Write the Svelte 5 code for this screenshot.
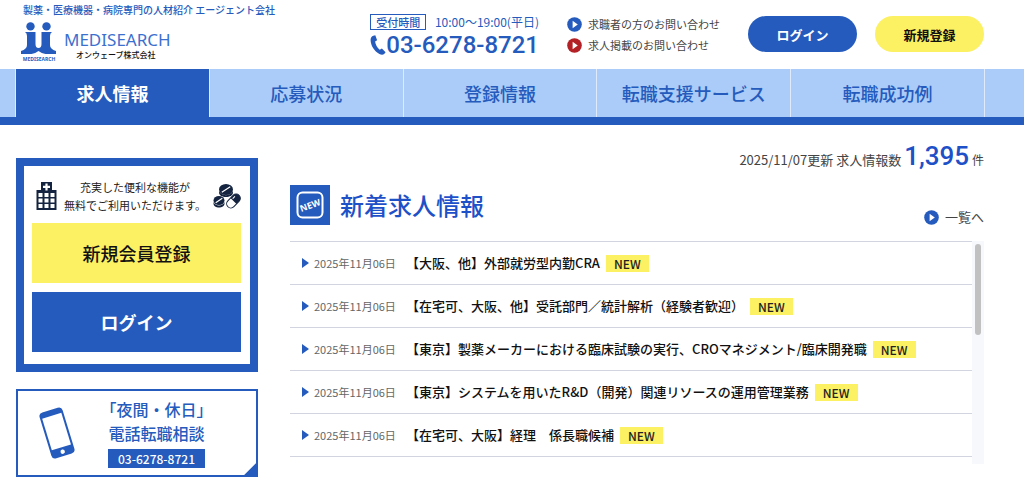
<script lang="ts">
	type Job = {
		date: string;
		title: string;
	};

	const menu = ['求人情報', '応募状況', '登録情報', '転職支援サービス', '転職成功例'];

	let current = $state<number>(0);

	const jobs: Job[] = [
		{ date: '2025年11月06日', title: '【大阪、他】外部就労型内勤CRA' },
		{ date: '2025年11月06日', title: '【在宅可、大阪、他】受託部門／統計解析（経験者歓迎）' },
		{
			date: '2025年11月06日',
			title: '【東京】製薬メーカーにおける臨床試験の実行、CROマネジメント/臨床開発職'
		},
		{ date: '2025年11月06日', title: '【東京】システムを用いたR&D（開発）関連リソースの運用管理業務' },
		{ date: '2025年11月06日', title: '【在宅可、大阪】経理　係長職候補' }
	];
</script>

{#snippet arrow()}
	<svg class="arrow" viewBox="0 0 15 15" aria-hidden="true">
		<circle cx="7.5" cy="7.5" r="7.3" fill="currentColor" />
		<path d="M5.600 3.800v7.400l5.200-3.700z" fill="#fff" />
	</svg>
{/snippet}

<header class="header">
	<div class="brand">
		<p class="tagline">製薬・医療機器・病院専門の人材紹介 エージェント会社</p>
		<a class="logo" href="#top">
			<span class="logo-mark">
				<svg viewBox="0 0 38 33" aria-hidden="true">
					<g fill="#255bbc">
						<circle cx="10.5" cy="4.4" r="4.2" />
						<circle cx="26.5" cy="4.4" r="4.2" />
						<path
							d="M5 10h10.500v12q0 4 3 4t3-4V10H32q-2 1-2 4v9q0 4 6 6v3H25.500q-3 0-7-3-4 3-7 3H1v-3q6-2 6-6v-9q0-3-2-4z"
						/>
					</g>
				</svg>
				<span class="logo-small">MEDISEARCH</span>
			</span>
			<span class="logo-text">
				<span class="logo-name">MEDISEARCH</span>
				<span class="logo-company">オンウェーブ株式会社</span>
			</span>
		</a>
	</div>

	<div class="contact">
		<div class="hours">
			<span class="hours-label">受付時間</span>
			<span>10:00～19:00(平日)</span>
		</div>
		<a class="tel" href="tel:0362788721">
			<svg viewBox="0 0 16 20" aria-hidden="true">
				<path
					d="M3.400.8 5.300.3l1.800 4.900-2 1.300c.4 3 2 6 4.600 8.200l2.200-1.100 3.700 3.600-1.400 1.700c-1.200 1.100-3 1-4.800.1C4.400 16.600.6 10.500.6 5.100.6 3 1.600 1.300 3.400.8z"
					fill="currentColor"
				/>
			</svg>03-6278-8721
		</a>
	</div>

	<div class="inquiry">
		<a href="#seeker">{@render arrow()}求職者の方のお問い合わせ</a>
		<a class="red" href="#company">{@render arrow()}求人掲載のお問い合わせ</a>
	</div>

	<div class="account">
		<button type="button" class="pill">ログイン</button>
		<button type="button" class="pill yellow">新規登録</button>
	</div>
</header>

<nav class="nav">
	<ul>
		{#each menu as item, i}
			<li>
				<a href="#menu" class:active={i === current} onclick={() => (current = i)}>{item}</a>
			</li>
		{/each}
	</ul>
</nav>

<main class="main">
	<aside class="side">
		<section class="member">
			<div class="member-lead">
				<svg class="hospital" viewBox="0 0 21 28" aria-hidden="true">
					<path d="M5 0h11v8h4.500v20H.5V8H5z" fill="#14233f" />
					<path d="M10.500 1.400v7M7 4.900h7" stroke="#fff" stroke-width="2.200" />
					<path
						d="M2.500 11h4v4h-4zM8.500 11h4v4h-4zM14.500 11h4v4h-4zM2.500 16.500h4v4h-4zM8.500 16.500h4v4h-4zM14.500 16.500h4v4h-4zM2.500 22h4v4h-4zM8.500 22h4v4h-4zM14.500 22h4v4h-4z"
						fill="#fff"
					/>
				</svg>
				<p>充実した便利な機能が<br />無料でご利用いただけます。</p>
				<svg class="pills" viewBox="0 0 28 28" aria-hidden="true">
					<g fill="#14233f">
						<ellipse cx="13" cy="7.500" rx="7" ry="5.500" />
						<path d="M6 9v1.500c0 6 14 6 14 0V9c-2 5.500-12 5.500-14 0z" />
						<ellipse cx="6" cy="18.500" rx="5.500" ry="4.500" />
						<path d="M.5 20v1.500c0 5.300 11 5.300 11 0V20c-1.500 4.500-9.500 4.500-11 0z" />
					</g>
					<path d="m8.800 10.300 8.400-5.600M2.700 20.700l6.600-4.400" stroke="#fff" stroke-width="1.200" />
					<g transform="rotate(-46 20.500 19)">
						<rect x="12.500" y="14.800" width="16" height="8.400" rx="4.200" fill="#fff" stroke="#14233f" />
						<path d="M20.500 14.800h3.800a4.200 4.200 0 0 1 0 8.400h-3.800z" fill="#14233f" />
						<path d="M22 16.800h2.500" stroke="#fff" stroke-linecap="round" />
					</g>
				</svg>
			</div>
			<button type="button" class="block yellow">新規会員登録</button>
			<button type="button" class="block">ログイン</button>
		</section>

		<a class="night" href="tel:0362788721">
			<svg viewBox="0 0 38 52" aria-hidden="true">
				<g transform="rotate(-17 19 26)">
					<rect x="7" y="2" width="24" height="48" rx="4" fill="#255bbc" />
					<rect x="9" y="8" width="20" height="33" fill="#fff" />
					<circle cx="19" cy="45.500" r="2.200" fill="#fff" />
				</g>
			</svg>
			<span class="night-text">
				<span>「夜間・休日」</span>
				<span>電話転職相談</span>
				<span class="night-tel">03-6278-8721</span>
			</span>
		</a>
	</aside>

	<section class="content">
		<p class="update">2025/11/07更新 求人情報数 <strong>1,395</strong> <small>件</small></p>

		<div class="heading">
			<svg viewBox="0 0 40 40" aria-hidden="true">
				<path d="M0 0h40v40H0z" fill="#255bbc" />
				<rect x="7.500" y="7.500" width="25" height="25" rx="5" fill="none" stroke="#fff" stroke-width="2" />
				<text x="20" y="23.500" transform="rotate(-20 20 20)">NEW</text>
			</svg>
			<h2>新着求人情報</h2>
			<a href="#list">{@render arrow()}一覧へ</a>
		</div>

		<div class="list">
			<ul>
				{#each jobs as job}
					<li>
						<span class="date">{job.date}</span>
						<a href="#job">{job.title}</a>
						<span class="new">NEW</span>
					</li>
				{/each}
			</ul>
			<div class="scrollbar"><div class="thumb"></div></div>
		</div>
	</section>
</main>

<style>
	:global(body) {
		background: #fff;
		color: #444;
		font-family: 'Noto Sans CJK JP', sans-serif;
		font-size: 13px;
	}

	p,
	h2,
	ul {
		margin: 0;
		padding: 0;
		list-style: none;
	}

	a {
		color: inherit;
		text-decoration: none;
	}

	button {
		border: 0;
		background: #255bbc;
		color: #fff;
		font-family: inherit;
		font-weight: 700;
		cursor: pointer;
	}

	button.yellow {
		background: #fcf063;
		color: #111;
		font-weight: 500;
	}

	svg {
		flex: none;
		display: block;
	}

	.arrow {
		width: 15px;
		height: 15px;
		color: #255bbc;
	}

	/* header */
	.header {
		display: grid;
		grid-template-columns: 1fr auto auto auto;
		column-gap: 28px;
		padding: 2px 40px 5px 16px;
	}

	.tagline {
		padding-left: 7px;
		color: #255bbc;
		font-size: 10px;
		font-weight: 500;
		line-height: 16px;
	}

	.logo {
		display: flex;
		gap: 6px;
		padding: 4px 0 0 4px;
	}

	.logo-mark {
		width: 38px;
	}

	.logo-mark svg {
		width: 38px;
		height: 33px;
	}

	.logo-small {
		display: flex;
		justify-content: center;
		color: #255bbc;
		font: 700 5px/9px 'Noto Sans', sans-serif;
	}

	.logo-text {
		display: flex;
		flex-direction: column;
		padding-top: 9px;
	}

	.logo-name {
		color: #3c70cf;
		font: 17px/18px 'Noto Sans', sans-serif;
	}

	.logo-company {
		padding-left: 12px;
		color: #111;
		font-size: 8px;
		font-weight: 500;
		line-height: 12px;
	}

	.contact {
		padding-top: 12px;
		color: #255bbc;
	}

	.hours {
		display: flex;
		justify-content: space-between;
		gap: 5px;
		font-size: 12px;
		line-height: 16px;
	}

	.hours-label {
		padding: 0 5px;
		border: 1px solid #255bbc;
		font-size: 11px;
		font-weight: 500;
		line-height: 14px;
	}

	.tel {
		display: flex;
		align-items: center;
		font-family: Roboto, sans-serif;
		font-size: 24px;
		font-weight: 500;
		line-height: 30px;
	}

	.tel svg {
		width: 16px;
		height: 20px;
	}

	.inquiry {
		padding-top: 12px;
		font-size: 11px;
		line-height: 21px;
	}

	.inquiry a {
		display: flex;
		align-items: center;
		gap: 6px;
	}

	.red .arrow {
		color: #b32025;
	}

	.account {
		display: flex;
		gap: 18px;
		padding-top: 14px;
	}

	.pill {
		width: 109px;
		height: 36px;
		border-radius: 18px;
		font-size: 13px;
	}

	button.pill {
		font-weight: 700;
	}

	/* global menu */
	.nav {
		padding: 0 39px 0 15px;
		border-bottom: 8px solid #255bbc;
		background: #abccf9;
	}

	.nav ul {
		display: grid;
		grid-template-columns: repeat(5, 1fr);
		border-left: 1px solid #dfebfc;
	}

	.nav a {
		display: block;
		border-right: 1px solid #dfebfc;
		color: #255bbc;
		font-size: 18px;
		font-weight: 500;
		line-height: 48px;
		text-align: center;
	}

	.nav a.active {
		background: #255bbc;
		color: #fff;
		font-weight: 700;
	}

	/* body */
	.main {
		display: grid;
		grid-template-columns: 242px 1fr;
		column-gap: 32px;
		padding: 0 40px 10px 16px;
	}

	.side {
		padding-top: 33px;
	}

	.member {
		display: flex;
		flex-direction: column;
		gap: 9px;
		padding: 12px 9px 12px 8px;
		border: 8px solid #255bbc;
	}

	.member-lead {
		display: flex;
		align-items: center;
		justify-content: space-between;
		padding-left: 4px;
		color: #222;
		font-size: 11px;
		line-height: 18px;
		text-align: center;
		white-space: nowrap;
	}

	.hospital {
		width: 21px;
		height: 28px;
	}

	.pills {
		width: 28px;
		height: 28px;
	}

	.block {
		height: 60px;
		font-size: 18px;
	}

	.night {
		display: flex;
		gap: 32px;
		margin-top: 17px;
		padding: 6px 20px 7px;
		border: 2px solid #255bbc;
		background: linear-gradient(135deg, transparent 48%, #255bbc 54%) right bottom / 12px 12px no-repeat;
		color: #255bbc;
	}

	.night svg {
		width: 38px;
		height: 52px;
		margin-top: 10px;
	}

	.night-text {
		display: flex;
		flex-direction: column;
		align-items: center;
		width: 97px;
		font-size: 16px;
		font-weight: 500;
		line-height: 24px;
		white-space: nowrap;
	}

	.night-tel {
		align-self: stretch;
		margin-top: 4px;
		background: #255bbc;
		color: #fff;
		font-size: 12px;
		line-height: 19px;
		text-align: center;
	}

	.content {
		min-width: 0;
	}

	.update {
		padding-top: 13px;
		font-size: 13px;
		line-height: 36px;
		text-align: right;
	}

	.update strong {
		color: #1e50c8;
		font-family: Roboto, sans-serif;
		font-size: 26px;
		font-weight: 500;
	}

	.update small {
		font-size: 12px;
	}

	.heading {
		display: flex;
		align-items: center;
		gap: 10px;
		padding: 7px 0 16px;
	}

	.heading > svg {
		width: 40px;
		height: 40px;
	}

	.heading text {
		fill: #fff;
		font: 700 9px 'Open Sans', sans-serif;
		text-anchor: middle;
	}

	.heading h2 {
		flex: 1;
		color: #1e50c8;
		font-size: 24px;
		font-weight: 500;
		line-height: 40px;
	}

	.heading a {
		display: flex;
		align-items: center;
		align-self: flex-end;
		gap: 6px;
		font-size: 13px;
		line-height: 16px;
	}

	.list {
		display: flex;
	}

	.list ul {
		flex: 1;
		min-width: 0;
		padding-bottom: 7px;
		border-top: 1px solid #d2d5e0;
	}

	.list li {
		display: flex;
		align-items: center;
		padding-left: 12px;
		border-bottom: 1px solid #d2d5e0;
		line-height: 42px;
		white-space: nowrap;
	}

	.list li::before {
		content: '';
		border: solid transparent;
		border-width: 5px 0 5px 7px;
		border-left-color: #255bbc;
	}

	.date {
		width: 87px;
		margin: 0 5px;
		color: #666;
		font-size: 11px;
	}

	.list a {
		color: #111;
		font-size: 13px;
		font-weight: 500;
	}

	.new {
		margin-left: 6px;
		padding: 0 8px;
		background: #fcf063;
		color: #222;
		font-size: 12px;
		font-weight: 500;
		line-height: 17px;
	}

	.scrollbar {
		width: 12px;
		background: #f7f8fc;
	}

	.thumb {
		width: 6px;
		height: 91px;
		margin: 3px auto;
		border-radius: 3px;
		background: #c1c1c1;
	}
</style>
